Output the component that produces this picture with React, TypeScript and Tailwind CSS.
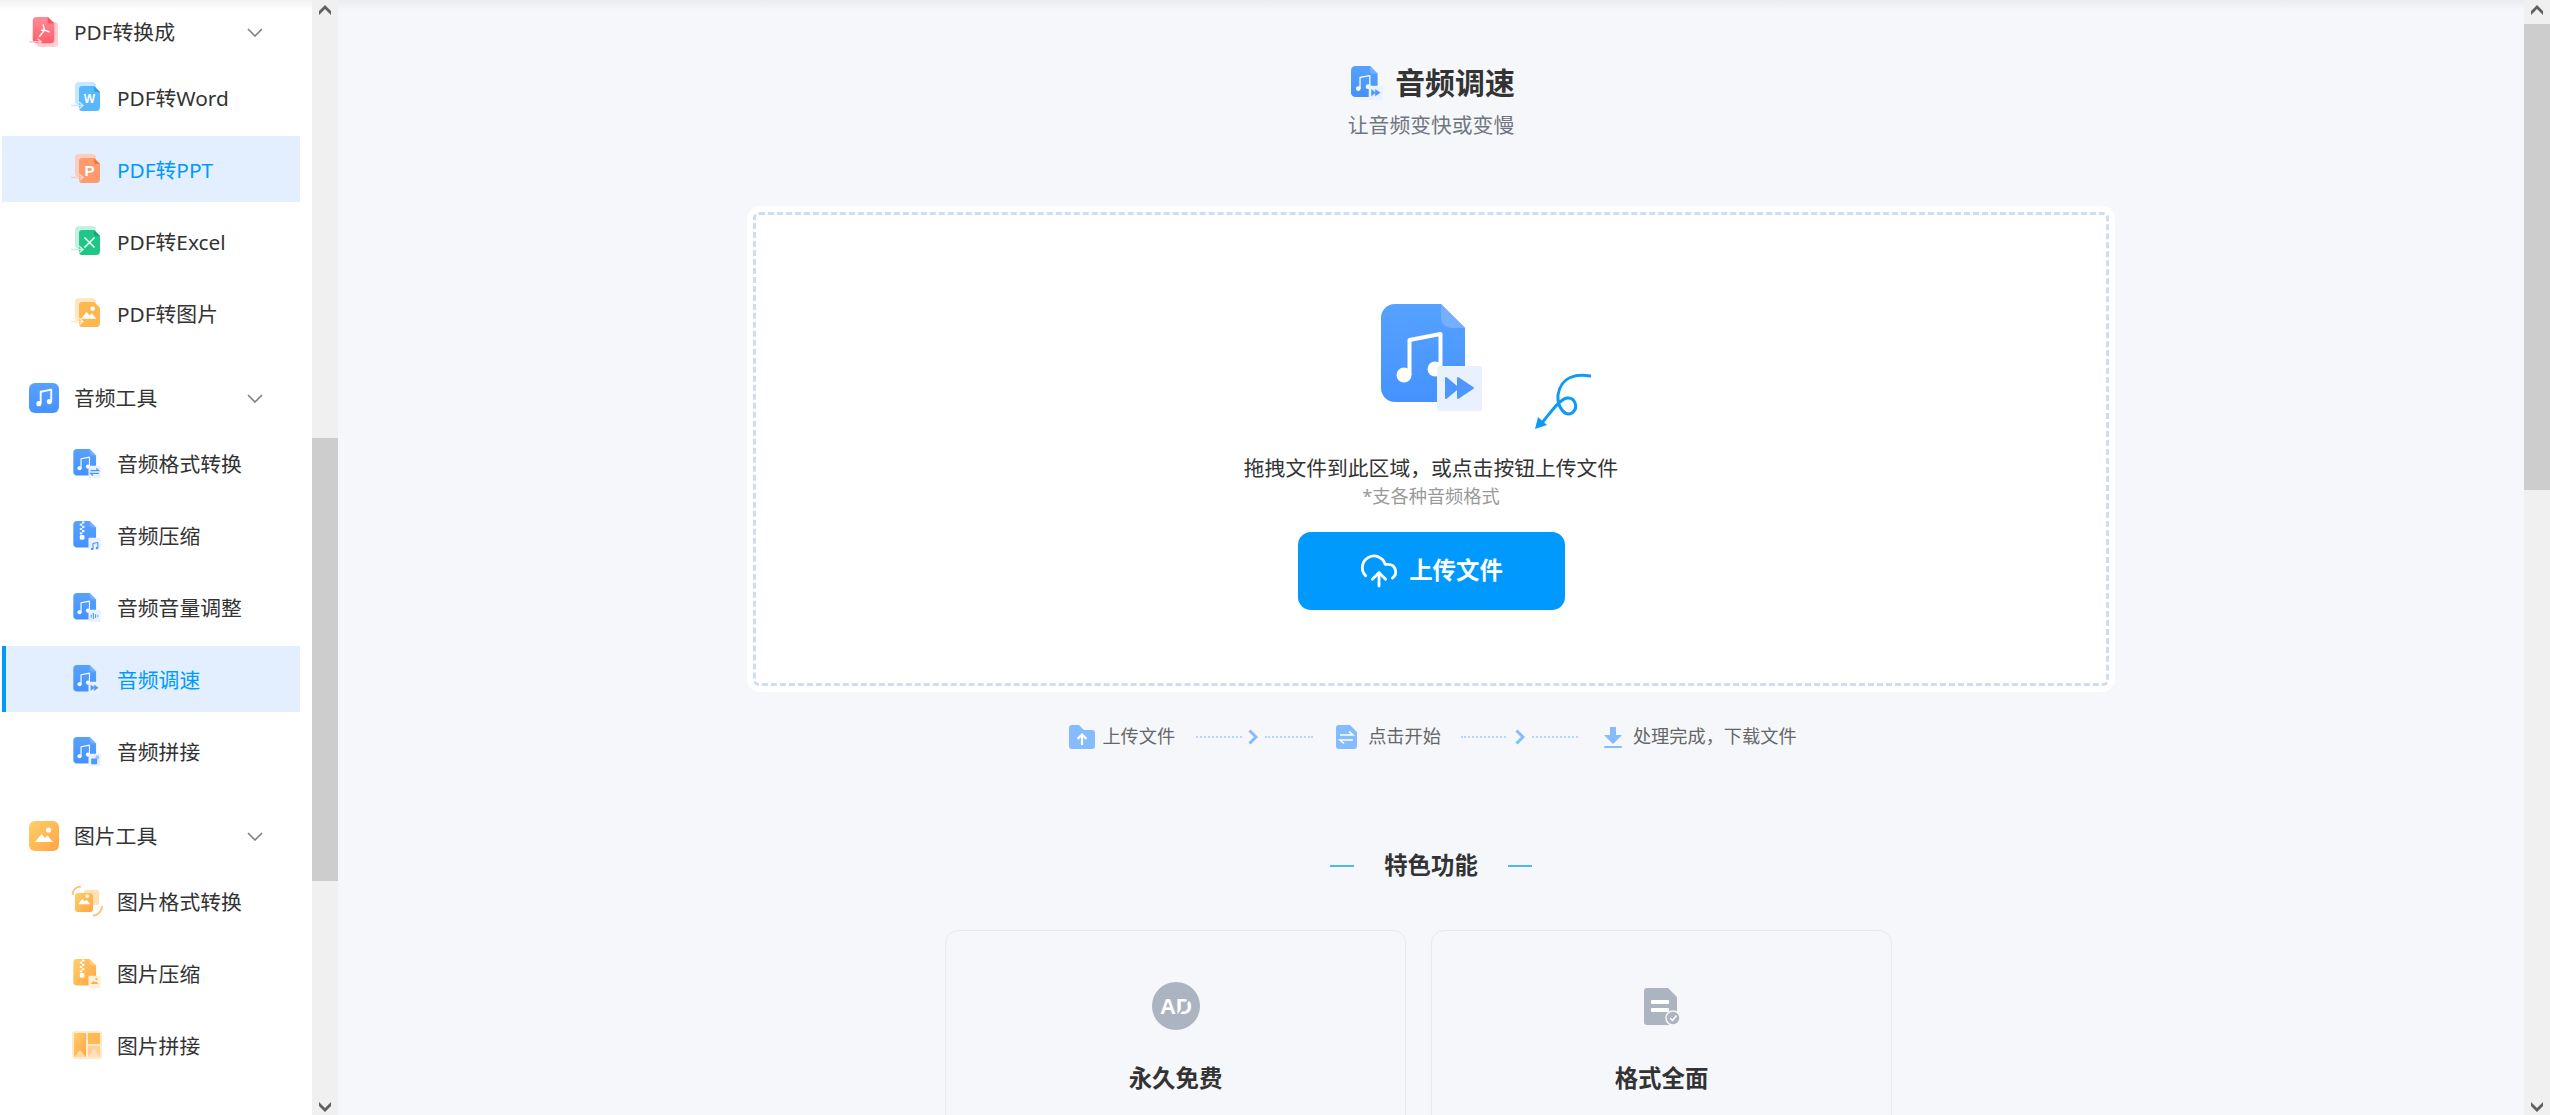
import React from 'react'
import { CloudUpload } from 'lucide-react'

const Note: React.FC<{ color?: string; sw?: number }> = ({ color = '#fff', sw = 4 }) => (
  <g>
    <circle cx="23" cy="71" r="7.5" fill={color} />
    <circle cx="54" cy="65" r="7.5" fill={color} />
    <path d="M28.5 71V36L59.5 30V65" stroke={color} strokeWidth={sw} fill="none" strokeLinejoin="round" />
  </g>
)

const Peaks: React.FC<{ color: string; sun?: boolean }> = ({ color, sun = true }) => (
  <g fill={color}>
    <path d="M6 21L12.5 13L16 17L18.5 14.5L24 21Z" />
    {sun && <circle cx="19.5" cy="9" r="2.6" />}
  </g>
)

type Badge = 'swap' | 'note' | 'wave' | 'forward' | 'join' | 'image'

const BadgeGlyph: React.FC<{ type: Badge }> = ({ type }) => {
  const c = '#4d97ff'
  switch (type) {
    case 'swap':
      return <path d="M63 80H93L85 72M94 90H64L72 98" stroke={c} strokeWidth="5" fill="none" />
    case 'note':
      return (
        <g transform="translate(56 62) scale(0.58)">
          <Note color={c} sw={7} />
        </g>
      )
    case 'wave':
      return <path d="M66 80V90M74 74V96M82 78V92M90 82V88" stroke={c} strokeWidth="4" fill="none" />
    case 'forward':
      return (
        <g fill={c} stroke={c} strokeWidth="2" strokeLinejoin="round">
          <path d="M65 74L77 84L65 94Z" />
          <path d="M77 74L92 84L77 94Z" />
        </g>
      )
    case 'join':
      return (
        <g>
          <rect x="82" y="68" width="13" height="13" rx="2" fill="#9cc5ff" />
          <rect x="66" y="79" width="22" height="22" rx="3" fill={c} />
        </g>
      )
    case 'image':
      return (
        <g transform="translate(55 60) scale(1.55)">
          <Peaks color="#ffae4a" />
        </g>
      )
  }
}

const FileIcon: React.FC<{
  tone?: 'blue' | 'orange'
  glyph?: 'note' | 'zip'
  badge: Badge
  className: string
}> = ({ tone = 'blue', glyph = 'note', badge, className }) => (
  <svg viewBox="0 0 101 107" className={className}>
    <path
      d="M14 0H60L84 24V84a14 14 0 0 1-14 14H14A14 14 0 0 1 0 84V14A14 14 0 0 1 14 0Z"
      fill={tone === 'blue' ? 'url(#g-blue)' : 'url(#g-orange)'}
    />
    <path d="M60 0L84 24H70a10 10 0 0 1-10-10Z" fill={tone === 'blue' ? '#74aeff' : '#ffd083'} />
    {glyph === 'note' ? (
      <Note />
    ) : (
      <g fill="#fff">
        <rect x="32" y="2" width="9" height="7" />
        <rect x="24" y="10" width="9" height="7" />
        <rect x="32" y="18" width="9" height="7" />
        <rect x="24" y="26" width="9" height="7" />
        <rect x="32" y="34" width="9" height="7" />
        <rect x="24" y="42" width="9" height="7" />
        <rect x="24" y="52" width="17" height="17" rx="5" />
      </g>
    )}
    <rect x="56" y="62" width="45" height="45" rx="3" fill={tone === 'blue' ? '#e9f1ff' : '#fff0d6'} />
    <BadgeGlyph type={badge} />
  </svg>
)

// the PDF icons: a pale sheet behind, a coloured sheet in front, a small arrow
const ConvertIcon: React.FC<{ front: string; back: string; fold: string; children: React.ReactNode }> = ({
  front,
  back,
  fold,
  children,
}) => (
  <svg viewBox="0 0 32 30" className="h-[30px] w-[32px]">
    <rect x="4" y="0" width="21" height="23" rx="4" fill={back} />
    <path d="M11 4H23L29 10V25a4 4 0 0 1-4 4H11a3 3 0 0 1-3-3V7a3 3 0 0 1 3-3Z" fill={front} />
    <path d="M23 4L29 10H25a2 2 0 0 1-2-2Z" fill={fold} />
    {children}
    <path d="M0 23.5H11M8 20L12 23.5L8 27" stroke={back} strokeWidth="1.6" fill="none" />
  </svg>
)

const PdfIcon = () => (
  <svg viewBox="0 0 32 32" className="h-[32px] w-[32px]">
    <rect x="8" y="5" width="23" height="27" rx="4" fill="#ffd0d3" />
    <path d="M8 0H20L27 7V24a4 4 0 0 1-4 4H8a4 4 0 0 1-4-4V4a4 4 0 0 1 4-4Z" fill="url(#g-red)" />
    <path d="M20 0L27 7H23a3 3 0 0 1-3-3Z" fill="#ff4e5e" />
    <path d="M15 8L16.5 14M16.5 14L11 21M16.5 14L22 16M16.5 14H13" stroke="#fff" strokeWidth="1.6" fill="none" />
    <path d="M0 26.5H12M9 23L13 26.5L9 30" stroke="#ffc5c9" strokeWidth="1.6" fill="none" />
  </svg>
)

const MusicSquare = () => (
  <svg viewBox="0 0 30 30" className="h-[30px] w-[30px]">
    <rect width="30" height="30" rx="6" fill="url(#g-blue)" />
    <g transform="translate(2 -3.5) scale(0.34)">
      <Note sw={5.5} />
    </g>
  </svg>
)

const PictureSquare = () => (
  <svg viewBox="0 0 30 30" className="h-[30px] w-[30px]">
    <rect width="30" height="30" rx="6" fill="url(#g-orange)" />
    <Peaks color="#fff" />
  </svg>
)

const PictureConvert = () => (
  <svg viewBox="0 0 32 32" className="h-[32px] w-[32px]">
    <rect x="13" y="5" width="15" height="15" rx="2" fill="#ffe0b2" />
    <rect x="4" y="8" width="18" height="19" rx="3" fill="url(#g-orange)" />
    <g transform="translate(3 5) scale(0.68)">
      <Peaks color="#fff" />
    </g>
    <path d="M1.5 10C1.5 5 5 1.5 10 1.5M31 21C31 26 27 30.5 22 30.5" stroke="#ffc47a" strokeWidth="2" fill="none" />
  </svg>
)

const PictureJoin = () => (
  <svg viewBox="0 0 30 28" className="h-[28px] w-[30px]">
    <rect width="30" height="28" rx="3" fill="#ffeacb" />
    <rect x="2" y="2" width="12" height="24" fill="url(#g-orange)" />
    <path d="M2 26L8 19L14 26Z" fill="#ffd9a6" />
    <rect x="16" y="2" width="12" height="11" fill="#ffb950" />
    <rect x="16" y="15" width="12" height="11" fill="#ffcf95" />
    <path d="M16 26L22 17L28 26Z" fill="#ffe0b8" />
  </svg>
)

const Chevron: React.FC = () => (
  <svg viewBox="0 0 16 9" className="h-[9px] w-[16px]" fill="none" stroke="#7f7f7f" strokeWidth="1.6">
    <path d="M1 1L8 8L15 1" />
  </svg>
)

const BarArrow: React.FC<{ down?: boolean }> = ({ down }) => (
  <svg viewBox="0 0 12 10" className={down ? 'h-[10px] w-[12px] rotate-180' : 'h-[10px] w-[12px]'}>
    <path d="M6 0L12 6V10L6 4L0 10V6Z" fill="#606060" />
  </svg>
)

const Scrollbar: React.FC<{ thumb: string }> = ({ thumb }) => (
  <div className="flex h-full w-[26px] shrink-0 flex-col bg-[#f0f0f1]">
    <div className="flex h-[24px] shrink-0 items-start justify-center pt-[5px]">
      <BarArrow />
    </div>
    <div className={thumb} />
    <div className="flex-1" />
    <div className="flex h-[24px] shrink-0 items-end justify-center pb-[3px]">
      <BarArrow down />
    </div>
  </div>
)

type Item = { label: string; icon: React.ReactNode; active?: boolean; bar?: boolean }
type Group = { label: string; icon: React.ReactNode; items: Item[] }

const audioFile = (badge: Badge, glyph: 'note' | 'zip' = 'note') => (
  <FileIcon badge={badge} glyph={glyph} className="h-[29px] w-[28px]" />
)

const groups: Group[] = [
  {
    label: 'PDF转换成',
    icon: <PdfIcon />,
    items: [
      {
        label: 'PDF转Word',
        icon: (
          <ConvertIcon front="#58b8fb" back="#c6e7fd" fold="#2f9fe9">
            <text x="18.5" y="20.5" fontSize="12" fontWeight="700" fill="#fff" textAnchor="middle" fontFamily="Liberation Sans">W</text>
          </ConvertIcon>
        ),
      },
      {
        label: 'PDF转PPT',
        active: true,
        icon: (
          <ConvertIcon front="#fe9a6d" back="#f8cfbd" fold="#f9733a">
            <text x="18.5" y="22" fontSize="15" fontWeight="700" fill="#fff" textAnchor="middle" fontFamily="Liberation Sans">P</text>
          </ConvertIcon>
        ),
      },
      {
        label: 'PDF转Excel',
        icon: (
          <ConvertIcon front="#20c687" back="#c5f0df" fold="#12a86f">
            <path d="M13.5 11.5L23.5 21.5M23.5 11.5L13.5 21.5" stroke="#fff" strokeWidth="1.5" />
          </ConvertIcon>
        ),
      },
      {
        label: 'PDF转图片',
        icon: (
          <ConvertIcon front="#ffb752" back="#ffe7c2" fold="#ffb752">
            <g transform="translate(5 3) scale(0.85)">
              <Peaks color="#fff" />
            </g>
          </ConvertIcon>
        ),
      },
    ],
  },
  {
    label: '音频工具',
    icon: <MusicSquare />,
    items: [
      { label: '音频格式转换', icon: audioFile('swap') },
      { label: '音频压缩', icon: audioFile('note', 'zip') },
      { label: '音频音量调整', icon: audioFile('wave') },
      { label: '音频调速', icon: audioFile('forward'), active: true, bar: true },
      { label: '音频拼接', icon: audioFile('join') },
    ],
  },
  {
    label: '图片工具',
    icon: <PictureSquare />,
    items: [
      { label: '图片格式转换', icon: <PictureConvert /> },
      { label: '图片压缩', icon: <FileIcon tone="orange" glyph="zip" badge="image" className="h-[29px] w-[28px]" /> },
      { label: '图片拼接', icon: <PictureJoin /> },
    ],
  },
]

const Sidebar = () => (
  <aside className="relative h-full w-[312px] shrink-0 overflow-hidden bg-white">
    <div className="absolute left-0 right-0 top-0 h-[10px] bg-gradient-to-b from-black/5 to-transparent" />
    <div className="flex flex-col gap-[20px]">
      {groups.map((g) => (
        <div key={g.label}>
          <div className="flex h-[64px] items-center pl-[29px] pr-[49px] text-[20.8px] text-[#333]">
            <span className="flex w-[30px] shrink-0 justify-center">{g.icon}</span>
            <span className="ml-[15px] flex-1 pt-[1px]">{g.label}</span>
            <Chevron />
          </div>
          <div className="flex flex-col gap-[6px]">
            {g.items.map((it) => (
              <div
                key={it.label}
                className={
                  it.active
                    ? 'ml-[2px] flex h-[66px] w-[298px] items-center bg-[#e3effe] text-[20.8px] text-[#009aff]'
                    : 'ml-[2px] flex h-[66px] w-[298px] items-center text-[20.8px] text-[#333]'
                }
              >
                <span className={it.bar ? 'h-full w-[4px] shrink-0 bg-[#009aff]' : 'h-full w-[4px] shrink-0'} />
                <span className="ml-[65px] flex w-[32px] shrink-0 justify-center">{it.icon}</span>
                <span className="ml-[14px] pt-[3px]">{it.label}</span>
              </div>
            ))}
          </div>
        </div>
      ))}
    </div>
  </aside>
)

const CurlyArrow = () => (
  <svg viewBox="0 0 56 56" className="absolute left-[154px] top-[69px] h-[56px] w-[56px]" fill="none">
    <path
      d="M55 3C42 1 26 3 23 22C22 34 30 44 37 40C44 35 40 24 32 25C24 26 14 42 5 52"
      stroke="#0f9bf5"
      strokeWidth="3"
      strokeLinecap="round"
    />
    <path d="M0 56L3 44L12 52Z" fill="#0f9bf5" />
  </svg>
)

const UploadCard = () => (
  <div className="mt-[67px] h-[486px] w-[1368px] shrink-0 rounded-[13px] bg-white p-[6px]">
    <div className="flex h-full flex-col items-center rounded-[6px] border-[3px] border-dashed border-[#cfdcf9]">
      <div className="relative mt-[89px] h-[107px] w-[101px] shrink-0">
        <FileIcon badge="forward" className="h-[107px] w-[101px]" />
        <CurlyArrow />
      </div>
      <p className="mt-[43px] h-[28px] text-[20.8px] leading-[28px] text-[#333]">拖拽文件到此区域，或点击按钮上传文件</p>
      <p className="mt-[2px] h-[24px] text-[18.2px] leading-[24px] text-[#999]">*支各种音频格式</p>
      <button className="mt-[24px] flex h-[78px] w-[267px] items-center justify-center gap-[10px] rounded-[13px] bg-[#009aff] text-[23.4px] font-bold text-white">
        <CloudUpload size={40} strokeWidth={1.7} />
        上传文件
      </button>
    </div>
  </div>
)

const Dots: React.FC<{ w: string }> = ({ w }) => <span className={w} />

const StepChevron = () => (
  <svg viewBox="0 0 10 16" className="h-[16px] w-[10px]" fill="none" stroke="#85bbff" strokeWidth="3">
    <path d="M1.5 1.5L8 8L1.5 14.5" />
  </svg>
)

const Steps = () => (
  <div className="mt-[33px] flex h-[24px] shrink-0 items-center pl-[4px] text-[18.2px] text-[#666]">
    <svg viewBox="0 0 26 24" className="h-[24px] w-[26px]">
      <path d="M3 0H10L15 5H23a3 3 0 0 1 3 3V21a3 3 0 0 1-3 3H3a3 3 0 0 1-3-3V3a3 3 0 0 1 3-3Z" fill="#85bbff" />
      <path d="M13 20V10M8.5 14L13 9.5L17.5 14" stroke="#fff" strokeWidth="2.2" fill="none" />
    </svg>
    <span className="ml-[7px]">上传文件</span>
    <Dots w="ml-[21px] w-[46px] border-t-2 border-dotted border-[#b5d6ff]" />
    <span className="ml-[6px] flex">
      <StepChevron />
    </span>
    <Dots w="ml-[7px] w-[48px] border-t-2 border-dotted border-[#b5d6ff]" />
    <svg viewBox="0 0 21 24" className="ml-[23px] h-[24px] w-[21px]">
      <path d="M3 0H14L21 7V21a3 3 0 0 1-3 3H3a3 3 0 0 1-3-3V3a3 3 0 0 1 3-3Z" fill="#85bbff" />
      <path d="M4 10H17L13 6.5M17 15H4L8 18.5" stroke="#fff" strokeWidth="1.6" fill="none" />
    </svg>
    <span className="ml-[11px]">点击开始</span>
    <Dots w="ml-[20px] w-[45px] border-t-2 border-dotted border-[#b5d6ff]" />
    <span className="ml-[9px] flex">
      <StepChevron />
    </span>
    <Dots w="ml-[7px] w-[46px] border-t-2 border-dotted border-[#b5d6ff]" />
    <svg viewBox="0 0 18 21" className="ml-[26px] h-[21px] w-[18px]">
      <path d="M6 0H12V8H18L9 17L0 8H6Z" fill="#85bbff" />
      <rect y="19" width="18" height="2" rx="1" fill="#85bbff" />
    </svg>
    <span className="ml-[11px]">处理完成，下载文件</span>
  </div>
)

const Feature: React.FC<{ title: string; icon: React.ReactNode }> = ({ title, icon }) => (
  <div className="flex h-[300px] w-[461px] flex-col items-center rounded-[13px] border border-[#e8eaf0] pt-[51px]">
    <div className="flex h-[48px] items-center justify-center">{icon}</div>
    <h3 className="mt-[32px] h-[32px] text-[23.4px] font-bold leading-[32px] text-[#333]">{title}</h3>
  </div>
)

export default function App() {
  return (
    <div className="flex h-[1115px] w-[2550px] overflow-hidden font-['Noto_Sans','Noto_Sans_CJK_SC',sans-serif]">
      <svg className="absolute h-0 w-0">
        <defs>
          <linearGradient id="g-blue" x1="0" y1="0" x2="0" y2="1">
            <stop offset="0" stopColor="#56a2ff" />
            <stop offset="1" stopColor="#4592ff" />
          </linearGradient>
          <linearGradient id="g-orange" x1="0" y1="0" x2="1" y2="1">
            <stop offset="0" stopColor="#ffcf6c" />
            <stop offset="1" stopColor="#ffa540" />
          </linearGradient>
          <linearGradient id="g-red" x1="0" y1="0" x2="0" y2="1">
            <stop offset="0" stopColor="#ff8c94" />
            <stop offset="1" stopColor="#ff5d6c" />
          </linearGradient>
        </defs>
      </svg>
      <Sidebar />
      <Scrollbar thumb="mt-[414px] h-[443px] shrink-0 bg-[#cdcdcd]" />
      <main className="relative flex h-full flex-1 flex-col items-center overflow-hidden bg-[#f6f7fb]">
        <div className="absolute left-0 right-0 top-0 h-[10px] bg-gradient-to-b from-black/5 to-transparent" />
        <div className="mt-[66px] flex h-[34px] shrink-0 items-center gap-[12px] pl-[4px]">
          <FileIcon badge="forward" className="h-[34px] w-[32px]" />
          <h1 className="text-[29.9px] font-bold leading-[34px] text-[#333]">音频调速</h1>
        </div>
        <p className="mt-[11px] h-[28px] shrink-0 text-[20.8px] leading-[28px] text-[#6f7680]">让音频变快或变慢</p>
        <UploadCard />
        <Steps />
        <div className="mt-[101px] flex h-[32px] shrink-0 items-center">
          <span className="h-[2px] w-[24px] bg-[#009aff]/70" />
          <h2 className="mx-[30px] text-[23.4px] font-bold text-[#333]">特色功能</h2>
          <span className="h-[2px] w-[24px] bg-[#009aff]/70" />
        </div>
        <div className="mt-[48px] flex w-[972px] shrink-0 gap-[25px]">
          <Feature
            title="永久免费"
            icon={
              <svg viewBox="0 0 48 48" className="h-[48px] w-[48px]">
                <circle cx="24" cy="24" r="24" fill="#acb3c1" />
                <text x="24" y="31.5" fontSize="22" fontWeight="700" fill="#fff" textAnchor="middle" fontFamily="Liberation Sans">AD</text>
                <path d="M25 35L37 17" stroke="#acb3c1" strokeWidth="2" />
              </svg>
            }
          />
          <Feature
            title="格式全面"
            icon={
              <svg viewBox="0 0 36 37" className="h-[37px] w-[36px]">
                <path d="M3 0H24L33 9V34a3 3 0 0 1-3 3H3a3 3 0 0 1-3-3V3a3 3 0 0 1 3-3Z" fill="#acb3c1" />
                <rect x="7" y="12" width="18" height="4" rx="1" fill="#fff" />
                <rect x="7" y="20" width="18" height="4" rx="1" fill="#fff" />
                <circle cx="29" cy="30" r="7" fill="#acb3c1" stroke="#f6f7fb" strokeWidth="1.5" />
                <path d="M26 30L28.5 32.5L32.5 27.5" stroke="#fff" strokeWidth="1.5" fill="none" />
              </svg>
            }
          />
        </div>
      </main>
      <Scrollbar thumb="h-[466px] shrink-0 bg-[#cdcdcd]" />
    </div>
  )
}
